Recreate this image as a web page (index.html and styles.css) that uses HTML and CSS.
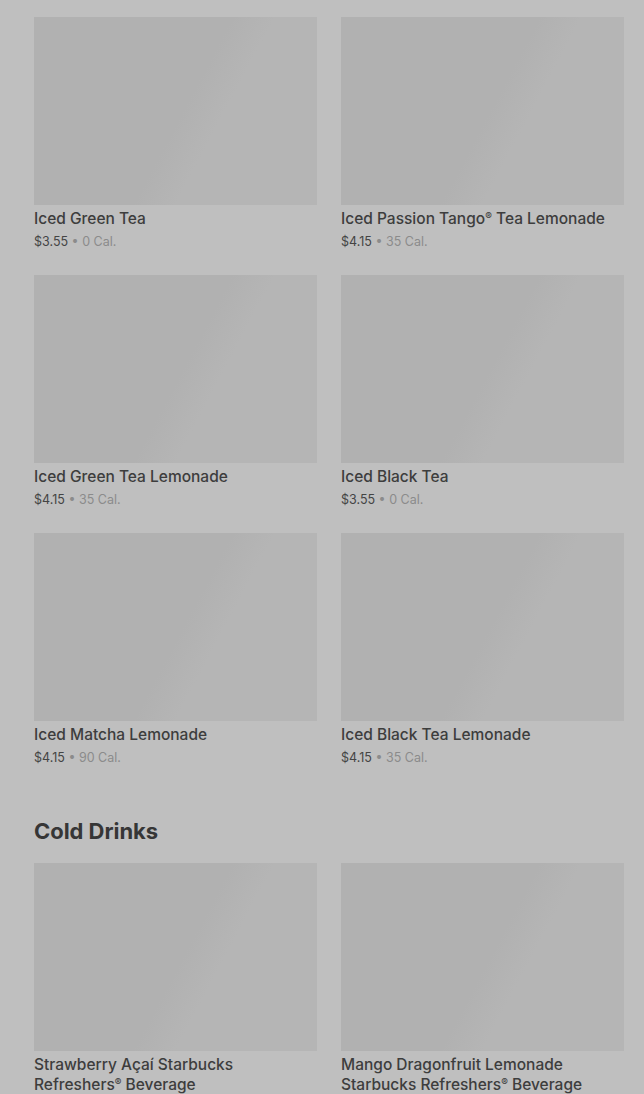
FILE: index.html
```html
<!DOCTYPE html>
<html lang="en">
<head>
    <meta charset="UTF-8">
    <meta name="viewport" content="width=device-width, initial-scale=1.0">
    <title>Menu</title>
    <link rel="stylesheet" href="styles.css">
</head>
<body>
    <div class="menu">
        <section class="seccion">
            <div class="grid">
                <div class="item">
                    <div class="foto"></div>
                    <h3 class="nombre">Iced Green Tea</h3>
                    <p class="precio">$3.55 <span class="cal">• 0 Cal.</span></p>
                </div>
                <div class="item">
                    <div class="foto"></div>
                    <h3 class="nombre">Iced Passion Tango<span class="reg">®</span> Tea Lemonade</h3>
                    <p class="precio">$4.15 <span class="cal">• 35 Cal.</span></p>
                </div>
                <div class="item">
                    <div class="foto"></div>
                    <h3 class="nombre">Iced Green Tea Lemonade</h3>
                    <p class="precio">$4.15 <span class="cal">• 35 Cal.</span></p>
                </div>
                <div class="item">
                    <div class="foto"></div>
                    <h3 class="nombre">Iced Black Tea</h3>
                    <p class="precio">$3.55 <span class="cal">• 0 Cal.</span></p>
                </div>
                <div class="item">
                    <div class="foto"></div>
                    <h3 class="nombre">Iced Matcha Lemonade</h3>
                    <p class="precio">$4.15 <span class="cal">• 90 Cal.</span></p>
                </div>
                <div class="item">
                    <div class="foto"></div>
                    <h3 class="nombre">Iced Black Tea Lemonade</h3>
                    <p class="precio">$4.15 <span class="cal">• 35 Cal.</span></p>
                </div>
            </div>
        </section>

        <section class="seccion">
            <h2 class="titulo">Cold Drinks</h2>
            <div class="grid">
                <div class="item">
                    <div class="foto"></div>
                    <h3 class="nombre">Strawberry Açaí Starbucks Refreshers<span class="reg">®</span> Beverage</h3>
                </div>
                <div class="item">
                    <div class="foto"></div>
                    <h3 class="nombre">Mango Dragonfruit Lemonade Starbucks Refreshers<span class="reg">®</span> Beverage</h3>
                </div>
            </div>
        </section>
    </div>
</body>
</html>
```

FILE: styles.css
```css
body {
    margin: 0;
    background-color: #bfbfbf;
    font-family: Inter, Roboto, "Liberation Sans", sans-serif;
    color: #3a3a3a;
}
.menu {
    padding: 17px 20px 0 34px;
}
.seccion {
    margin-bottom: 51px;
}
.titulo {
    font-size: 22px;
    font-weight: 700;
    letter-spacing: -0.05px;
    line-height: 28px;
    margin: 0 0 18px 0;
    color: #363636;
}
.grid {
    display: grid;
    grid-template-columns: 283px 283px;
    column-gap: 24px;
    row-gap: 25px;
}
.foto {
    height: 188px;
    background: linear-gradient(118deg, #b1b1b1 0%, #b1b1b1 52%, #b5b5b5 63%, #b5b5b5 100%);
}
.nombre {
    font-size: 15.5px;
    font-weight: 500;
    line-height: 20px;
    margin: 4px 0 0 0;
    color: #3d3d3d;
}
.reg {
    font-size: 10px;
    line-height: 1;
    vertical-align: 4px;
}
.precio {
    font-size: 12.5px;
    line-height: 16px;
    margin: 5px 0 0 0;
    color: #444;
}
.cal {
    color: #8b8b8b;
}
```
